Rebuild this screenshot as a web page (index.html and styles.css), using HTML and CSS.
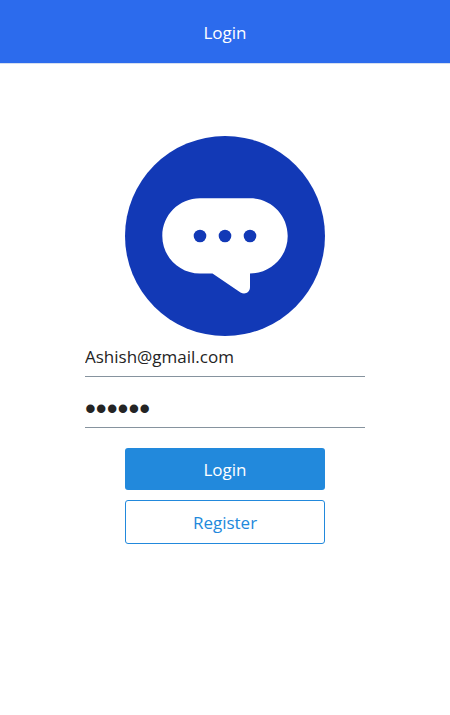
FILE: index.html
```html
<!DOCTYPE html>
<html lang="en">
<head>
<meta charset="utf-8">
<meta name="viewport" content="width=device-width, initial-scale=1">
<title>Login</title>
<link rel="stylesheet" href="styles.css">
</head>
<body>
<header class="header">
  <h1 class="header-title">Login</h1>
</header>
<main class="content">
  <svg class="logo" viewBox="0 0 200 200" aria-hidden="true">
    <circle cx="100" cy="100" r="100" fill="#1239b6"/>
    <path fill="#fff" d="M75 62.300H125C146 62.300 162.700 79 162.700 100C162.700 120.500 146 137.500 125 137.500V151C125 156.500 120 159 115.500 156.500L87.500 137.500H75C54 137.500 37.300 120.500 37.300 100C37.300 79 54 62.300 75 62.300Z"/>
    <g fill="#1239b6">
      <circle cx="75" cy="100" r="6.300"/>
      <circle cx="100" cy="100" r="6.300"/>
      <circle cx="125" cy="100" r="6.300"/>
    </g>
  </svg>
  <form class="form">
    <input class="field" type="email" aria-label="Email" value="Ashish@gmail.com">
    <input class="field field-password" type="password" aria-label="Password" value="secret">
    <button class="button button-solid" type="submit">Login</button>
    <button class="button button-outline" type="button">Register</button>
  </form>
</main>
</body>
</html>
```
FILE: styles.css
```css
* {
  box-sizing: border-box;
}

body {
  margin: 0;
  background: #fff;
  color: #242424;
  font: 17px/24px "Open Sans", "Noto Sans", sans-serif;
}

.header {
  padding: 21px 16px 18px;
  background: #2c6bed;
  border-bottom: 1px solid #d4def0;
  text-align: center;
}

.header-title {
  margin: 0;
  color: #fff;
  font-size: 17px;
  font-weight: 400;
}

.content {
  display: flex;
  flex-direction: column;
  align-items: center;
  padding: 72px 20px;
}

.logo {
  display: block;
  width: 200px;
  height: 200px;
}

.form {
  display: flex;
  flex-direction: column;
  align-items: center;
  gap: 10px;
  width: 100%;
  max-width: 280px;
}

.field {
  width: 100%;
  height: 41px;
  padding: 0;
  border: 0;
  border-bottom: 1px solid #86939e;
  border-radius: 0;
  outline: 0;
  background: transparent;
  color: inherit;
  font: inherit;
}

.field-password {
  margin-bottom: 10px;
  padding-top: 4px;
  font-family: "Liberation Sans", sans-serif;
  font-size: 31px;
}

.button {
  width: 200px;
  padding: 10px 8px 8px;
  border: 0;
  border-radius: 3px;
  font: inherit;
  cursor: pointer;
}

.button-solid {
  background: #2289dc;
  color: #fff;
}

.button-outline {
  border: 1px solid #2289dc;
  background: transparent;
  color: #2289dc;
}
```
